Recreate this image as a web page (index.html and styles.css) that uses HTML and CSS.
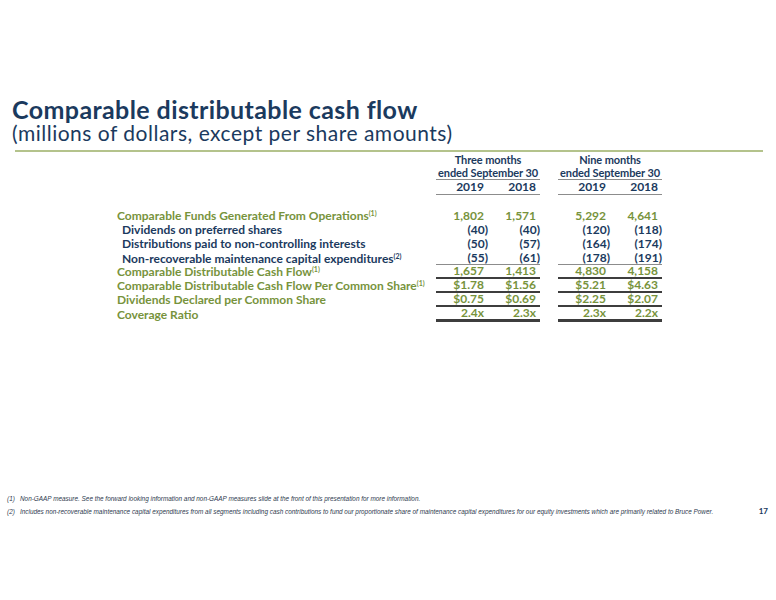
FILE: index.html
```html
<!DOCTYPE html>
<html lang="en">
<head>
  <meta charset="UTF-8" />
  <title>Comparable distributable cash flow</title>
  <link rel="stylesheet" href="styles.css">
</head>
<body>
  <div class="slide">
    <div class="heading">
      <h1>Comparable distributable cash flow</h1>
      <h2>(millions of dollars, except per share amounts)</h2>
    </div>

    <table class="cash">
      <colgroup>
        <col class="c-label"><col class="c-num"><col class="c-num"><col class="c-gap"><col class="c-num"><col class="c-num">
      </colgroup>
      <tr class="hd hd-top">
        <td></td><td colspan="2">Three months</td><td></td><td colspan="2">Nine months</td>
      </tr>
      <tr class="hd hd-mid">
        <td></td><td colspan="2" class="rule">ended September 30</td><td></td><td colspan="2" class="rule">ended September 30</td>
      </tr>
      <tr class="hd hd-year">
        <td></td><td class="rule num">2019</td><td class="rule num">2018</td><td></td><td class="rule num">2019</td><td class="rule num">2018</td>
      </tr>
      <tr class="spacer"><td colspan="6"></td></tr>

      <tr class="green">
        <td>Comparable Funds Generated From Operations<sup>(1)</sup></td>
        <td class="num">1,802</td><td class="num">1,571</td><td></td><td class="num">5,292</td><td class="num">4,641</td>
      </tr>
      <tr class="navy">
        <td class="indent">Dividends on preferred shares</td>
        <td class="num neg">(40)</td><td class="num neg">(40)</td><td></td><td class="num neg">(120)</td><td class="num neg">(118)</td>
      </tr>
      <tr class="navy">
        <td class="indent">Distributions paid to non-controlling interests</td>
        <td class="num neg">(50)</td><td class="num neg">(57)</td><td></td><td class="num neg">(164)</td><td class="num neg">(174)</td>
      </tr>
      <tr class="navy thin">
        <td class="indent">Non-recoverable maintenance capital expenditures<sup>(2)</sup></td>
        <td class="num neg">(55)</td><td class="num neg">(61)</td><td></td><td class="num neg">(178)</td><td class="num neg">(191)</td>
      </tr>
      <tr class="green thick">
        <td>Comparable Distributable Cash Flow<sup>(1)</sup></td>
        <td class="num">1,657</td><td class="num">1,413</td><td></td><td class="num">4,830</td><td class="num">4,158</td>
      </tr>
      <tr class="green thick">
        <td>Comparable Distributable Cash Flow Per Common Share<sup>(1)</sup></td>
        <td class="num">$1.78</td><td class="num">$1.56</td><td></td><td class="num">$5.21</td><td class="num">$4.63</td>
      </tr>
      <tr class="green thick">
        <td>Dividends Declared per Common Share</td>
        <td class="num">$0.75</td><td class="num">$0.69</td><td></td><td class="num">$2.25</td><td class="num">$2.07</td>
      </tr>
      <tr class="green heavy">
        <td>Coverage Ratio</td>
        <td class="num">2.4x</td><td class="num">2.3x</td><td></td><td class="num">2.3x</td><td class="num">2.2x</td>
      </tr>
    </table>

    <div class="notes">
      <div class="note">
        <span class="mark">(1)</span>
        <span>Non-GAAP measure. See the forward looking information and non-GAAP measures slide at the front of this presentation for more information.</span>
      </div>
      <div class="note">
        <span class="mark">(2)</span>
        <span>Includes non-recoverable maintenance capital expenditures from all segments including cash contributions to fund our proportionate share of maintenance capital expenditures for our equity investments which are primarily related to Bruce Power.</span>
        <span class="page">17</span>
      </div>
    </div>
  </div>
</body>
</html>
```

FILE: styles.css
```css
:root {
  --navy: #1b3a5e;
  --green: #77933c;
  --rule-green: #b4c38c;
  --rule-gray: #8c8c8c;
  --rule-dark: #3d3d3d;
}
* {
  box-sizing: border-box;
  margin: 0;
  padding: 0;
}
body {
  background: #fff;
  font-family: Lato, "Open Sans", sans-serif;
}
.slide {
  width: 776px;
  height: 600px;
  display: flex;
  flex-direction: column;
}
.heading {
  margin: 0 13px 0 15px;
  padding-top: 96px;
  padding-bottom: 6px;
  border-bottom: 2px solid var(--rule-green);
  color: var(--navy);
}
.heading h1 {
  margin-left: -3px;
  font-size: 25px;
  line-height: 26px;
  letter-spacing: 0.4px;
  font-weight: 700;
}
.heading h2 {
  margin-left: -3px;
  font-size: 21px;
  line-height: 22px;
  letter-spacing: 0.5px;
  font-weight: 400;
}

/* table */
.cash {
  width: 545px;
  margin-left: 117px;
  border-collapse: separate;
  border-spacing: 0;
  table-layout: fixed;
  font-size: 12px;
  font-weight: 700;
  white-space: nowrap;
}
.c-label { width: 319px; }
.c-num { width: 52px; }
.c-gap { width: 18px; }
.cash td {
  padding: 0;
  line-height: 14px;
}
.cash .num {
  text-align: right;
  padding-right: 4px;
}
.cash .num.neg {
  padding-right: 0;
}
.hd {
  color: var(--navy);
  text-align: center;
}
.hd-top td, .hd-mid td {
  font-size: 11px;
  letter-spacing: -0.1px;
}
.hd-top td { line-height: 15px; }
.hd-mid td { line-height: 12px; }
.hd-year td { line-height: 14px; }
.hd .rule { border-bottom: 1px solid var(--rule-gray); }
.spacer td { height: 14px; }

.green { color: var(--green); }
.navy { color: var(--navy); }
.indent { padding-left: 5px !important; }
sup {
  font-size: 7px;
  line-height: 0;
  vertical-align: 4px;
}
.thin td { line-height: 13px; }
.thin .num { border-bottom: 1px solid var(--rule-gray); }
.thick td, .heavy td { line-height: 12px; }
.thick .num { border-bottom: 2px solid var(--rule-dark); }
.heavy .num { border-bottom: 3px solid var(--rule-dark); }

/* footnotes */
.notes {
  margin-top: auto;
  padding: 0 8px 82px 7px;
  font-family: "Liberation Sans", Arial, sans-serif;
  font-style: italic;
  font-size: 6.4px;
  line-height: 13px;
  color: #2e3a4e;
}
.note {
  display: flex;
  align-items: baseline;
}
.mark {
  width: 13px;
  flex-shrink: 0;
}
.page {
  margin-left: auto;
  font-family: Lato, sans-serif;
  font-style: normal;
  font-weight: 700;
  font-size: 8px;
  color: var(--navy);
}
```
